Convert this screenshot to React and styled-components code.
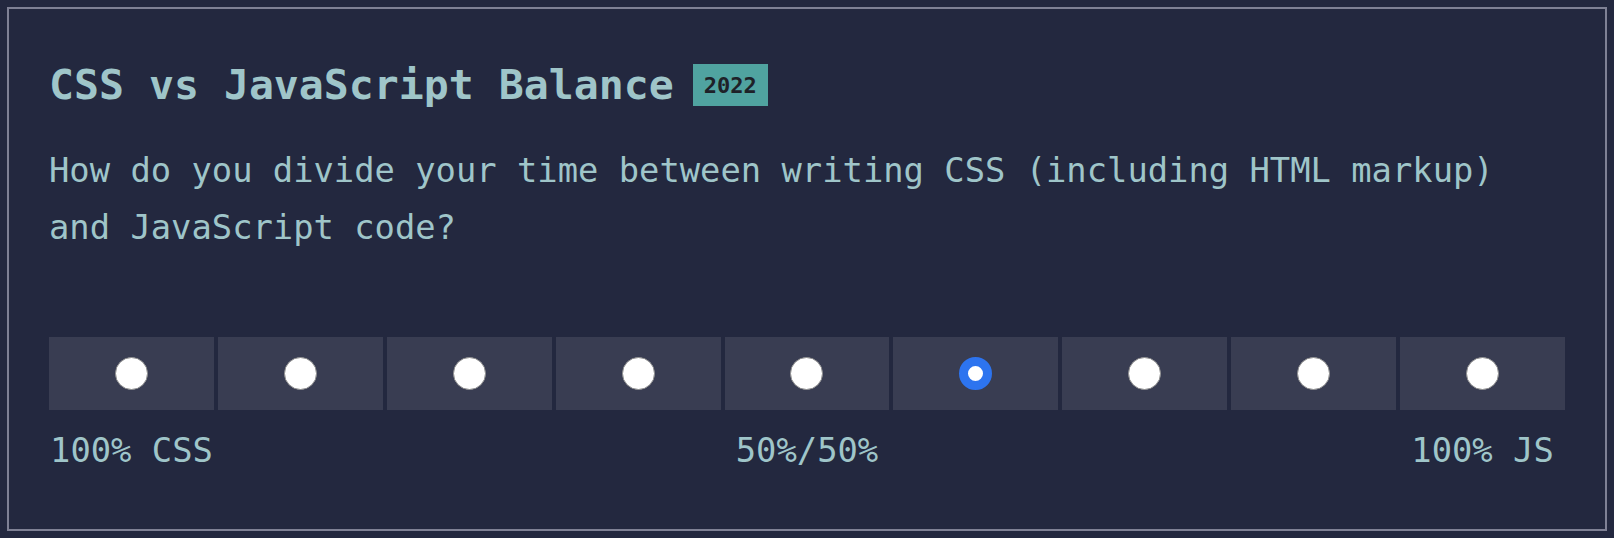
import styled, { createGlobalStyle } from "styled-components";

const GlobalStyle = createGlobalStyle`
  html, body {
    margin: 0;
    padding: 0;
    background: #23283f;
  }
  body {
    padding: 7px;
    box-sizing: border-box;
    font-family: "DejaVu Sans Mono", "Liberation Mono", monospace;
  }
`;

const Card = styled.fieldset`
  margin: 0;
  min-height: calc(100vh - 14px);
  box-sizing: border-box;
  border: 2px solid #7f8195;
  padding: 55px 40px 40px;
  background: #23283f;
  color: #9fc5c9;
  min-width: 0;
`;

const TitleRow = styled.div`
  display: flex;
  align-items: center;
  gap: 19px;
`;

const Title = styled.h2`
  margin: 0;
  font-size: 41.5px;
  line-height: 42px;
  font-weight: bold;
  color: #9fc5c9;
`;

const Badge = styled.span`
  display: inline-flex;
  align-items: center;
  justify-content: center;
  height: 42px;
  padding: 0 11px;
  background: #50a3a0;
  color: #1e2128;
  font-size: 22px;
  font-weight: bold;
`;

const Question = styled.p`
  margin: 36px 0 0;
  font-size: 33.8px;
  line-height: 57px;
`;

const Options = styled.div`
  display: grid;
  grid-template-columns: repeat(9, 1fr);
  gap: 4px;
  margin-top: 81px;
`;

const Option = styled.label`
  display: flex;
  align-items: center;
  justify-content: center;
  height: 73px;
  background: #393d52;
  cursor: pointer;
`;

const Radio = styled.input`
  appearance: none;
  margin: 0;
  width: 33px;
  height: 33px;
  border-radius: 50%;
  box-sizing: border-box;
  background: #fff;
  border: 1.5px solid #8f8f8f;
  cursor: pointer;

  &:checked {
    border: 9px solid #2d74ef;
  }
`;

const Labels = styled.div`
  display: grid;
  grid-template-columns: repeat(9, 1fr);
  gap: 4px;
  margin-top: 20px;
`;

const Label = styled.span`
  grid-column: ${(props) => props.$col};
  justify-self: center;
  white-space: nowrap;
  font-size: 33.8px;
  line-height: 41px;
`;

const values = [1, 2, 3, 4, 5, 6, 7, 8, 9];

function App() {
  return (
    <>
      <GlobalStyle />
      <Card>
        <TitleRow>
          <Title>CSS vs JavaScript Balance</Title>
          <Badge>2022</Badge>
        </TitleRow>
        <Question>
          How do you divide your time between writing CSS (including HTML markup)
          and JavaScript code?
        </Question>
        <Options>
          {values.map((v) => (
            <Option key={v}>
              <Radio type='radio' name='balance' value={v} defaultChecked={v === 6} />
            </Option>
          ))}
        </Options>
        <Labels>
          <Label $col={1}>100% CSS</Label>
          <Label $col={5}>50%/50%</Label>
          <Label $col={9}>100% JS</Label>
        </Labels>
      </Card>
    </>
  );
}

export default App;
